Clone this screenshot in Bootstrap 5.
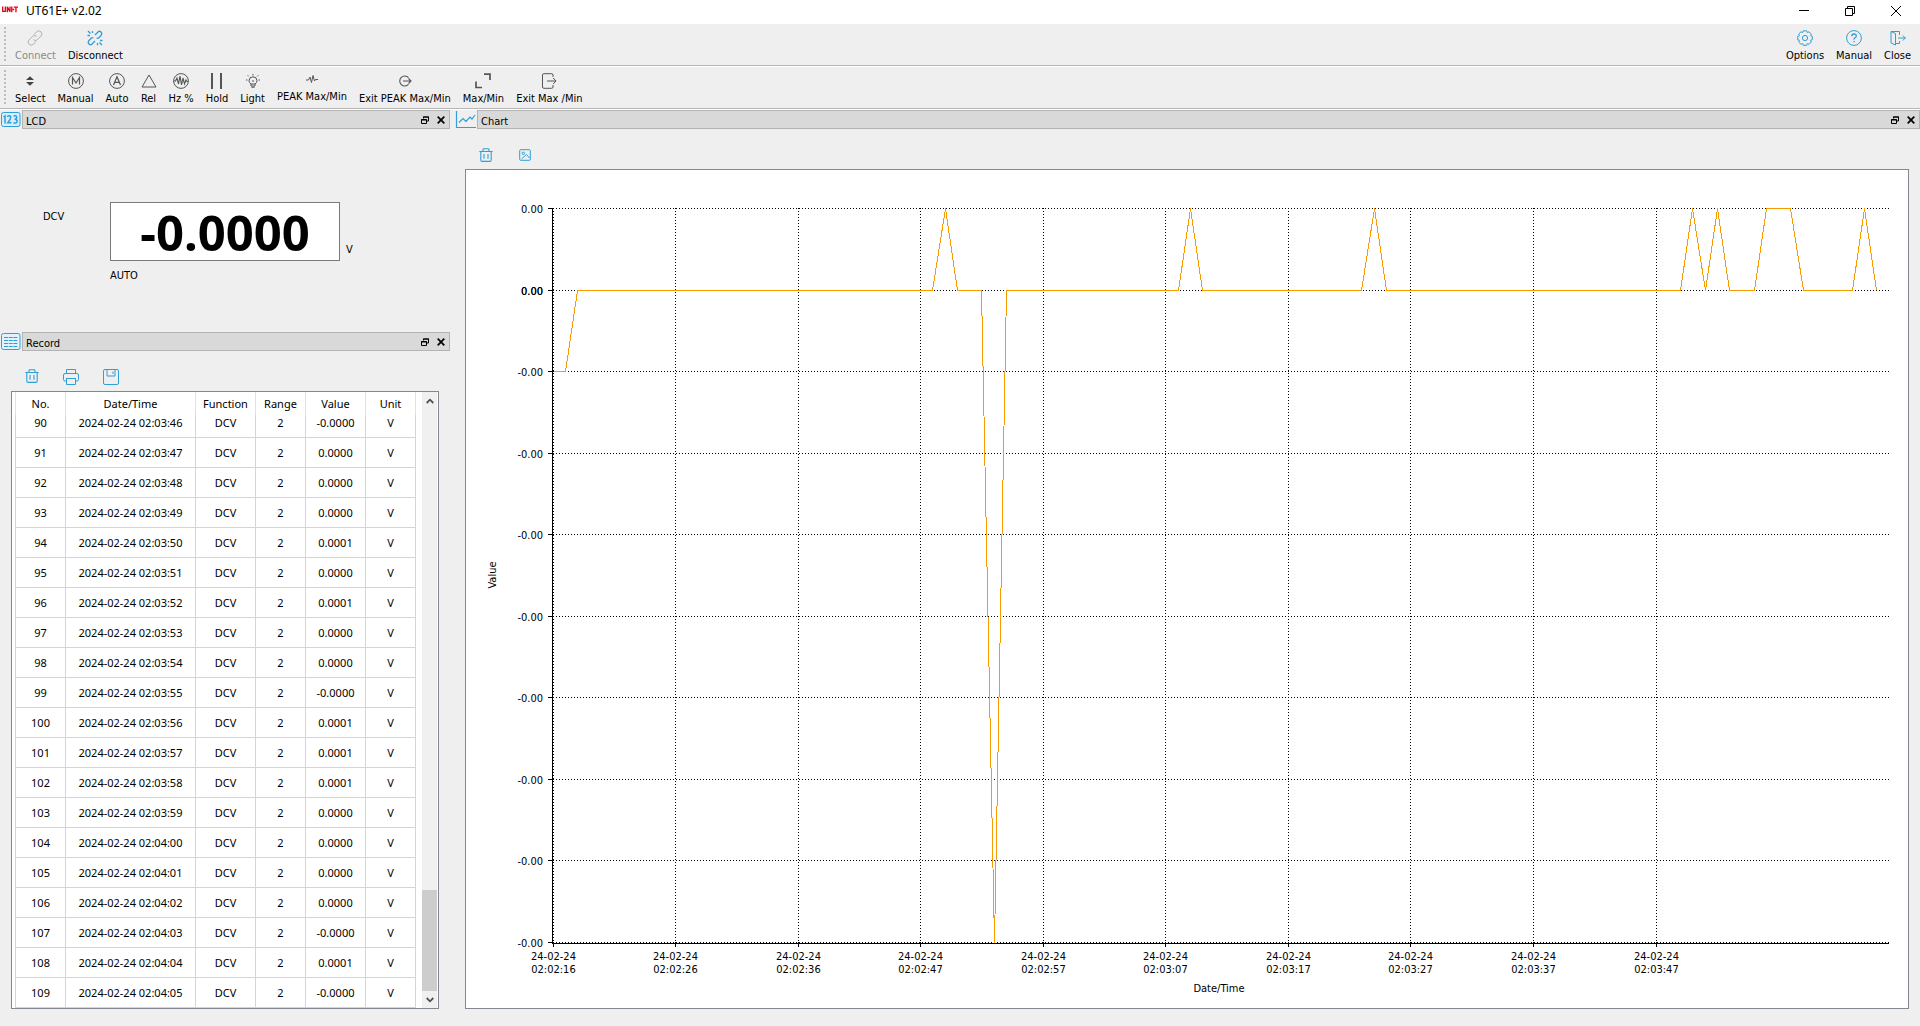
<!DOCTYPE html>
<html lang="en">
<head>
<meta charset="utf-8">
<meta name="viewport" content="width=device-width, initial-scale=1">
<title>UT61E+ v2.02</title>
<link href="https://cdn.jsdelivr.net/npm/bootstrap@5.3.0/dist/css/bootstrap.min.css" rel="stylesheet">
<style>
  :root { --ui: "DejaVu Sans Condensed", "Noto Sans", sans-serif; --seg: "Noto Sans", "Open Sans", sans-serif; --blue: #2f9fd9; }
  body { background: #efefef; color: #000; font-family: var(--ui); font-size: 11px; line-height: 14px; }
  button { background: none; border: 0; padding: 0; color: inherit; font: inherit; }
  svg { display: block; fill: none; stroke: currentColor; }
  .title-bar { height: 24px; background: #fff; font-family: var(--seg); font-size: 12px; padding: 0 1px 0 2px; }
  .win-btn { width: 46px; height: 17px; }
  .brand { color: #e60012; }
  .tool-bar { height: 42px; border-bottom: 1px solid #b5b5b5; box-shadow: 0 1px 0 #fff; margin-bottom: 1px; padding: 5px 9px 0 4px; }
  .grip { width: 2px; height: 34px; margin-top: -2px; background: repeating-linear-gradient(#bdbdbd 0 2px, transparent 2px 4px); }
  .tool-set { gap: 12px; }
  .grip + .tool-set { margin-left: 9px; }
  .tool-btn { display: flex; flex-direction: column; align-items: center; gap: 2px; white-space: nowrap; }
  .tool-btn .glyph { height: 18px; display: flex; align-items: center; }
  .tool-btn.raised { margin-top: -2px; }
  .tool-btn:disabled { color: #8a8a8a; }
  .tool-btn:disabled svg { color: #b0b0b0; }
  .fn svg { color: #555; }
  .blue svg, svg.blue { color: var(--blue); }
  .dock-left { width: 450px; }
  .dock-main { padding-left: 5px; }
  .dock-head { height: 20px; gap: 1px; }
  .dock-title { background: #d9d9d9; border: 1px solid #b4b4b4; height: 19px; padding: 0 4px 0 3px; gap: 4px; }
  .lcd-body { height: 202px; padding: 72px 0 0 43px; }
  .lcd-fn { width: 67px; padding-top: 8px; }
  .lcd-unit { padding: 41px 0 0 6px; }
  .lcd-box { width: 230px; height: 59px; border: 1px solid #7a7a7a; background: #fff; font-family: var(--seg); font-size: 49px; line-height: 58px; font-weight: 700; }
  .rec-tools { padding: 13px 25px 0; gap: 24px; height: 39px; }
  .rec-frame { margin: 0 11px 17px; border: 1px solid #828790; background: #fff; }
  .rec-table { font-family: var(--seg); width: 400px; table-layout: fixed; border-collapse: collapse; text-align: center; margin: 0 0 0 3px; }
  .rec-table th { font-weight: 400; height: 23px; padding: 0 0 1px; line-height: 15px; border: solid #e2e2e2; border-width: 0 1px; }
  .rec-table td { height: 30px; padding: 0; line-height: 15px; border: 1px solid #d4d4d4; }
  .rec-table tr.partial td { height: 22px; border-top: 0; padding-bottom: 6px; }
  .scroll-col { width: 15px; background: #f0f0f0; margin-right: 1px; color: #505050; }
  .scroll-thumb { height: 101px; background: #cdcdcd; }
  .scroll-btn { height: 17px; }
  .chart-tools { height: 39px; padding: 10px 24px 0; gap: 26px; }
  .chart-frame { margin: 0 11px 17px 10px; border: 1px solid #828790; background: #fff; min-height: 300px; }
  .chart-frame svg { width: 100%; height: 100%; }
  .chart-frame text { fill: #000; stroke: none; }
</style>
<script src="https://cdn.jsdelivr.net/npm/bootstrap@5.3.0/dist/js/bootstrap.bundle.min.js"></script>
</head>
<body>
<svg width="0" height="0" class="position-absolute" aria-hidden="true">
  <symbol id="i-float" viewBox="0 0 8 8"><path d="M2.500 2.500V1h5v4H6M2 1h6M.5 3.500h5v4h-5zM0 4h6" stroke-width="1"/></symbol>
  <symbol id="i-x" viewBox="0 0 8 8"><path d="M.7.7l6.600 6.600M7.300.7L.7 7.300" stroke-width="1.700"/></symbol>
  <symbol id="i-trash" viewBox="0 0 14 14"><path d="M4 3V1.500Q4 .7 5 .7h4Q10 .7 10 1.500V3M.3 3.500h13.400M1.800 3.500v8.500q0 1.400 1.400 1.400h7.600q1.400 0 1.400-1.400V3.500M5 6v4.700M9 6v4.700" stroke-width="1.100"/></symbol>
</svg>
<div class="d-flex flex-column min-vh-100">
  <header class="title-bar d-flex align-items-start">
    <svg class="brand mt-1" width="16" height="11" viewBox="0 0 18 11"><path d="M.8 2v5.700h3V2M6 8.500V2.500L9 8V2M11 2v6.500M12 5.500h1.800M13.200 2.800H18M15.700 2v6.500" stroke-width="1.500"/></svg>
    <span class="ms-1 ps-1 mt-1">UT61E+ v2.02</span>
    <div class="ms-auto d-flex">
      <button class="win-btn d-flex align-items-center justify-content-center mt-1 pb-1" aria-label="Minimize"><svg width="10" height="10"><path d="M0 4.500h10"/></svg></button>
      <button class="win-btn d-flex align-items-center justify-content-center mt-1 pb-1" aria-label="Restore"><svg width="10" height="10"><path d="M2.500 2V.5h7v7H8M.5 2.500h7v7h-7z"/></svg></button>
      <button class="win-btn d-flex align-items-center justify-content-center mt-1 pb-1" aria-label="Close window"><svg width="10" height="10"><path d="M0 0l10 10M10 0L0 10"/></svg></button>
    </div>
  </header>

  <div class="tool-bar d-flex align-items-start" role="toolbar" aria-label="Connection">
    <span class="grip"></span>
    <div class="tool-set d-flex blue">
      <button class="tool-btn" disabled><span class="glyph"><svg width="16" height="16" viewBox="0 0 16 16"><path d="M7 4.500l2.700-2.700a2.900 2.900 0 0 1 4.300 4.300L10.500 9.600a2.900 2.900 0 0 1-4.200 0M9 11.500l-2.700 2.700A2.900 2.900 0 0 1 2 9.900L5.500 6.400a2.900 2.900 0 0 1 4.200 0"/></svg></span>Connect</button>
      <button class="tool-btn"><span class="glyph"><svg width="16" height="16" viewBox="0 0 16 16"><path d="M8 5l3-3q1.500-1.500 3 0t0 3.500l-3 3M8 11l-3 3q-1.500 1.500-3 0t0-3.500l3-3M11 8.500L9.500 8M5 7.500l1.500.5M1 1l2.500 2.500M5.500 1v2M.5 5.500H3M15 15l-2.500-2.500M10.500 13v2.300M13 10.500h2.500" stroke-width="1.300"/></svg></span>Disconnect</button>
    </div>
    <div class="tool-set d-flex ms-auto blue">
      <button class="tool-btn"><span class="glyph"><svg width="16" height="16" viewBox="0 0 16 16"><circle cx="8" cy="8" r="2.600"/><path d="M6.300.8h3.400l.6 1.700 1.700-.7 2.300 2.300-.7 1.700 1.700.6v3.300l-1.700.6.7 1.700-2.300 2.300-1.700-.7-.6 1.700H6.300l-.6-1.700-1.700.7L1.700 12l.7-1.700-1.700-.6V6.400l1.700-.6-.7-1.700L4 1.800l1.700.7z" stroke-linejoin="round"/></svg></span>Options</button>
      <button class="tool-btn"><span class="glyph"><svg width="16" height="16" viewBox="0 0 16 16"><circle cx="8" cy="8" r="7.400"/><path d="M5.700 6.200Q5.700 4 8 4t2.300 1.900Q10.300 7 9 7.800T8 9.700M8 10.900v1.400" stroke-width="1.300"/></svg></span>Manual</button>
      <button class="tool-btn"><span class="glyph"><svg width="16" height="16" viewBox="0 0 16 16"><path d="M1 1.500h8.500V5M1 1.500v11.500l4.500 2V3.500L1 1.500M5.500 13.500h4V11M8 8h7.500M12.800 5.500L15.300 8l-2.500 2.500"/></svg></span>Close</button>
    </div>
  </div>

  <div class="tool-bar d-flex align-items-start" role="toolbar" aria-label="Meter functions">
    <span class="grip"></span>
    <div class="tool-set d-flex fn">
      <button class="tool-btn"><span class="glyph"><svg width="10" height="10" viewBox="0 0 10 10"><path d="M1 4L5 .3 9 4zM1 6l4 3.700L9 6z" fill="#444" stroke="none"/></svg></span>Select</button>
      <button class="tool-btn"><span class="glyph"><svg width="16" height="16" viewBox="0 0 16 16"><circle cx="8" cy="8" r="7.400"/><path d="M4.500 11.500v-7L8 10l3.500-5.500v7" stroke-width="1.200"/></svg></span>Manual</button>
      <button class="tool-btn"><span class="glyph"><svg width="16" height="16" viewBox="0 0 16 16"><circle cx="8" cy="8" r="7.400"/><path d="M4.500 12L8 3.700l3.500 8.300M5.800 9.300h4.400" stroke-width="1.200"/></svg></span>Auto</button>
      <button class="tool-btn"><span class="glyph"><svg width="16" height="16" viewBox="0 0 16 16"><path d="M8 2L15 14H1z"/></svg></span>Rel</button>
      <button class="tool-btn"><span class="glyph"><svg width="16" height="16" viewBox="0 0 16 16"><circle cx="8" cy="8" r="7.400"/><path d="M1 8h1.500l1.500-3 1.500 6L7 3l1.500 9L10 5l1.500 6L13 7l1 1.500h1" stroke-width="1.100"/></svg></span>Hz %</button>
      <button class="tool-btn"><span class="glyph"><svg width="16" height="16" viewBox="0 0 16 16"><path d="M3 0v16M12 0v16" stroke-width="2"/></svg></span>Hold</button>
      <button class="tool-btn"><span class="glyph"><svg width="14" height="14" viewBox="0 0 14 14"><path d="M5 10Q3 8.800 3 6.800a4 4 0 0 1 8 0Q11 8.800 9 10v2H5zM5 10h4M5.500 13.300h3M6 7h2M7 0v1.500M0 6h1.500M12.500 6H14M1.700 1.300l1 1M12.300 1.300l-1 1"/></svg></span>Light</button>
      <button class="tool-btn raised"><span class="glyph"><svg width="12" height="8" viewBox="0 0 12 8"><path d="M0 5h2.500L4 2l1.500 5.500L7 .5 8.500 6l1-1.500H12"/></svg></span>PEAK Max/Min</button>
      <button class="tool-btn"><span class="glyph"><svg width="14" height="12" viewBox="0 0 14 12"><path d="M10.500 2.700a5 5 0 1 0 0 6.600M5 6h8M10.500 3.500L13 6l-2.500 2.500" stroke-width="1.100"/></svg></span>Exit PEAK Max/Min</button>
      <button class="tool-btn"><span class="glyph"><svg width="16" height="16" viewBox="0 0 16 16"><path d="M9 1.200h6V7M1 8.500v6h6" stroke-width="1.700"/></svg></span>Max/Min</button>
      <button class="tool-btn"><span class="glyph"><svg width="16" height="16" viewBox="0 0 16 16"><path d="M12 4V2q0-1.300-1.300-1.300H2.800Q1.500.7 1.500 2v12q0 1.300 1.300 1.300h7.900Q12 15.300 12 14v-2M6 8h9M12.200 5L15 8l-2.800 3"/></svg></span>Exit Max /Min</button>
    </div>
  </div>

  <main class="d-flex flex-grow-1">
    <div class="dock-left d-flex flex-column flex-shrink-0">
      <section>
        <div class="dock-head d-flex">
          <svg class="blue" width="21" height="19" viewBox="0 0 21 19"><rect x="1.500" y="2.500" width="18.500" height="14" rx="2" fill="#d8eefa"/><path d="M3.500 7L5 6v7.500M7.500 7q0-1.300 1.600-1.300T10.700 7.300Q10.700 9 7.800 12.700H11.500M13.500 6q3.200-.8 3.200 1.500 0 1.700-2.200 1.700 2.600 0 2.600 2 0 2.500-3.700 1.700" stroke-width="1.500"/></svg>
          <div class="dock-title d-flex align-items-center flex-grow-1"><span class="me-auto pt-1">LCD</span><button aria-label="Float LCD"><svg width="8" height="8"><use href="#i-float"/></svg></button><button class="ms-1" aria-label="Close LCD"><svg width="8" height="8"><use href="#i-x"/></svg></button></div>
        </div>
        <div class="lcd-body d-flex align-items-start">
          <span class="lcd-fn">DCV</span>
          <div><div class="lcd-box text-center"><output>-0.0000</output></div><div class="pt-1 mt-1">AUTO</div></div>
          <span class="lcd-unit">V</span>
        </div>
      </section>
      <section class="d-flex flex-column flex-grow-1">
        <div class="dock-head d-flex">
          <svg class="blue" width="21" height="19" viewBox="0 0 21 19"><rect x="1.500" y="1.500" width="18.500" height="16" rx="2" fill="#e2f2fb"/><path d="M4 5.500h13.500M4 8.500h13.500M4 11.500h13.500M4 14.500h13.500" stroke-dasharray="4 .7"/></svg>
          <div class="dock-title d-flex align-items-center flex-grow-1"><span class="me-auto pt-1">Record</span><button aria-label="Float record"><svg width="8" height="8"><use href="#i-float"/></svg></button><button class="ms-1" aria-label="Close record"><svg width="8" height="8"><use href="#i-x"/></svg></button></div>
        </div>
        <div class="rec-tools d-flex align-items-start blue">
          <button class="pt-1" aria-label="Clear"><svg width="14" height="14"><use href="#i-trash"/></svg></button>
          <button class="pt-1" aria-label="Print"><svg width="16" height="16" viewBox="0 0 16 16"><path d="M3.500 4.500v-4h9v4M3.500 12H2Q.5 12 .5 10.500V6Q.5 4.500 2 4.500h12q1.500 0 1.500 1.500v4.500Q15.500 12 14 12h-1.500M3 9.500h10M3.500 9.500v6h9v-6"/></svg></button>
          <button class="pt-1" aria-label="Save"><svg width="16" height="16" viewBox="0 0 16 16"><path d="M2 .5h12Q15.500.5 15.500 2v12q0 1.500-1.500 1.500H2Q.5 15.500.5 14V2Q.5.5 2 .5zM4 .5v6.500h8V.5M10 2.500v2.500"/></svg></button>
        </div>
        <div class="rec-frame d-flex flex-grow-1">
          <table class="rec-table align-self-start">
            <colgroup><col width="50"><col width="130"><col width="60"><col width="50"><col width="60"><col width="50"></colgroup>
            <thead><tr><th>No.</th><th>Date/Time</th><th>Function</th><th>Range</th><th>Value</th><th>Unit</th></tr></thead>
            <tbody id="records"></tbody>
          </table>
          <div class="scroll-col d-flex flex-column ms-auto">
            <button class="scroll-btn d-flex justify-content-center align-items-center" aria-label="Scroll up"><svg width="8" height="6"><path d="M.7 5L4 1.700 7.300 5" stroke-width="1.800"/></svg></button>
            <div class="scroll-thumb mt-auto"></div>
            <button class="scroll-btn d-flex justify-content-center align-items-center" aria-label="Scroll down"><svg width="8" height="6"><path d="M.7 1L4 4.300 7.300 1" stroke-width="1.800"/></svg></button>
          </div>
        </div>
      </section>
    </div>

    <section class="dock-main d-flex flex-column flex-grow-1">
      <div class="dock-head d-flex">
        <svg class="blue" width="21" height="19" viewBox="0 0 21 19"><path d="M1.500 1v16.500H21" stroke-width="1.200"/><path d="M4 12.500l4-4 3 3 4-4.500 2 2 3-4" stroke-width="1.200"/></svg>
        <div class="dock-title d-flex align-items-center flex-grow-1"><span class="me-auto pt-1">Chart</span><button aria-label="Float chart"><svg width="8" height="8"><use href="#i-float"/></svg></button><button class="ms-1" aria-label="Close chart"><svg width="8" height="8"><use href="#i-x"/></svg></button></div>
      </div>
      <div class="chart-tools d-flex align-items-center blue">
        <button aria-label="Clear chart"><svg width="14" height="14"><use href="#i-trash"/></svg></button>
        <button aria-label="Save picture"><svg width="12" height="12" viewBox="0 0 12 12"><rect x=".7" y=".7" width="10.600" height="10.600" rx="1"/><circle cx="4.300" cy="4.300" r="1.200"/><path d="M2.500 10l5-4.500L10.500 9"/></svg></button>
      </div>
      <div class="chart-frame flex-grow-1 d-flex"><svg id="chart" role="img" aria-label="Value over time"></svg></div>
    </section>
  </main>
</div>
<script>
  // Table of the last readings, numbered from 90, one per second.
  const values = ['-0.0000','0.0000','0.0000','0.0000','0.0001','0.0000','0.0001','0.0000','0.0000','-0.0000','0.0001','0.0001','0.0001','0.0000','0.0000','0.0000','0.0000','-0.0000','0.0001','-0.0000'];
  document.getElementById('records').innerHTML = values.map((v, i) => {
    const s = 46 + i, t = `02:0${3 + Math.floor(s / 60)}:${String(s % 60).padStart(2, '0')}`;
    return `<tr${i ? '' : ' class="partial"'}><td>${90 + i}</td><td>2024-02-24 ${t}</td><td>DCV</td><td>2</td><td>${v}</td><td>V</td></tr>`;
  }).join('');

  // Chart: [seconds, level], levels run from 1 down to -8.
  const series = [[0,-1],[1,-1],[2,0],[31,0],[32,1],[33,0],[35,0],[36,-8],[37,0],[51,0],[52,1],[53,0],[66,0],[67,1],[68,0],[92,0],[93,1],[94,0],[95,1],[96,0],[98,0],[99,1],[101,1],[102,0],[106,0],[107,1],[108,0]];
  const times = ['02:02:16','02:02:26','02:02:36','02:02:47','02:02:57','02:03:07','02:03:17','02:03:27','02:03:37','02:03:47'];
  const chart = document.getElementById('chart');
  function draw() {
    chart.innerHTML = '';
    const { width, height } = chart.parentNode.getBoundingClientRect();
    const L = 87, T = 38, R = Math.round(width) - 21, B = Math.round(height) - 68;
    const X = s => Math.floor(L + s * (R - L) / 109) + 0.5, Y = v => Math.round(T + (1 - v) * (B - T) / 9) + 0.5;
    let grid = '', axis = `M${L - 0.5} ${T}V${B + 1}H${R}`, text = '';
    for (let v = 1; v >= -8; v--) {
      grid += `M${L} ${Y(v)}H${R}`;
      axis += `M${L - 5} ${Y(v)}H${L}`;
      const label = `<text x="${L - 10}" y="${Y(v) + 4.5}" text-anchor="end">${v < 0 ? '-0.00' : '0.00'}</text>`;
      text += v === 0 ? label + label : label;
    }
    times.forEach((t, i) => {
      const x = X(i * 10);
      grid += `M${x} ${T}V${B}`;
      axis += `M${x} ${B}V${B + 5}`;
      text += `<text text-anchor="middle"><tspan x="${x}" y="${B + 18}">24-02-24</tspan><tspan x="${x}" y="${B + 31}">${t}</tspan></text>`;
    });
    text += `<text x="${(L + R) / 2 - 2}" y="${B + 50}" text-anchor="middle">Date/Time</text>`;
    text += `<text transform="translate(30 ${(T + B) / 2}) rotate(-90)" text-anchor="middle">Value</text>`;
    const line = 'M' + series.map(p => X(p[0]) + ' ' + Y(p[1])).join('L');
    chart.innerHTML = `<g shape-rendering="crispEdges"><path d="${grid}" stroke="#000" stroke-dasharray="1 2"/><path d="${axis}" stroke="#000"/><path d="${line}" stroke="#f89b00"/></g>${text}`;
  }
  draw();
  addEventListener('resize', draw);
</script>
</body>
</html>
